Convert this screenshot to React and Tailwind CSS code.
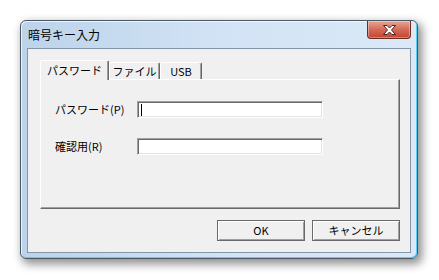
function CloseButton() {
  return (
    <div className="w-[44px] h-[18px] rounded-b-[4px] border border-t-0 border-[#6b2a22] bg-gradient-to-b from-[#e6a595] via-[#d46b58] to-[#c4432f] shadow-[inset_0_0_0_1px_rgba(255,255,255,0.35)] flex items-center justify-center">
      <svg width="13" height="10" viewBox="0 0 13 10">
        <polygon
          points="0.5,0.5 4,0.5 6.5,3 9,0.5 12.5,0.5 8.5,5 12.5,9.5 9,9.5 6.5,7 4,9.5 0.5,9.5 4.5,5"
          fill="#ffffff"
          stroke="#4a2420"
          strokeWidth="1"
          strokeLinejoin="round"
        />
      </svg>
    </div>
  );
}

function Tab({ label, active, width }) {
  if (active) {
    return (
      <div
        className={`${width} relative z-10 h-[20px] -mb-px bg-[#f0f0f0] border-l border-t border-white border-r border-r-[#696969] rounded-t-[2px] shadow-[inset_-1px_0_0_#a0a0a0] flex items-center pl-[6px] text-[11px] leading-none`}
      >
        {label}
      </div>
    );
  }
  return (
    <div
      className={`${width} h-[17px] bg-[#f0f0f0] border-l border-t border-white border-r border-r-[#696969] rounded-t-[2px] shadow-[inset_-1px_0_0_#a0a0a0] flex items-center justify-center text-[11px] leading-none`}
    >
      {label}
    </div>
  );
}

function Field({ label, caret }) {
  return (
    <div className="flex items-center">
      <div className="w-[82px] text-[11px] leading-none">{label}</div>
      <div className="w-[186px] h-[17px] bg-white border border-t-[#a0a0a0] border-l-[#a0a0a0] border-b-white border-r-white shadow-[inset_1px_1px_0_#696969,inset_-1px_-1px_0_#e3e3e3] flex items-center pl-[3px]">
        {caret && <div className="w-[1px] h-[12px] bg-black" />}
      </div>
    </div>
  );
}

function Button({ children }) {
  return (
    <div className="w-[88px] h-[21px] border border-[#696969] bg-[#f0f0f0] shadow-[inset_1px_1px_0_#ffffff,inset_-1px_-1px_0_#a0a0a0] flex items-center justify-center text-[11px] leading-none">
      {children}
    </div>
  );
}

export default function App() {
  return (
    <div className="min-h-screen bg-white pt-[20px] pl-[20px] font-['Noto_Sans_CJK_JP','Noto_Sans',sans-serif] text-black">
      <div className="w-[398px] h-[239px] rounded-[6px] border border-[#4a5866] bg-gradient-to-r from-[#bcd3ea] via-[#d2e3f5] to-[#dbe9f7] shadow-[inset_-1px_-1px_0_#5ccff5,inset_1px_1px_0_rgba(255,255,255,0.7),3px_4px_10px_1px_rgba(0,0,0,0.45)] flex flex-col px-[6px] pb-[5px]">
        <div className="h-[27px] flex items-start">
          <div className="flex-1 h-full flex items-center pl-[1px] text-[12px] leading-none">暗号キー入力</div>
          <CloseButton />
        </div>
        <div className="flex-1 border border-[#8496a8] bg-[#f0f0f0] flex flex-col pt-[11px] pl-[12px]">
          <div className="flex items-end">
            <Tab label="パスワード" active width="w-[69px]" />
            <Tab label="ファイル" width="w-[51px]" />
            <Tab label="USB" width="w-[42px]" />
          </div>
          <div className="w-[360px] h-[130px] border-l border-t border-white border-r border-b border-r-[#696969] border-b-[#696969] shadow-[inset_-1px_-1px_0_#a0a0a0] flex flex-col gap-[20px] pt-[21px] pl-[14px]">
            <Field label="パスワード(P)" caret />
            <Field label="確認用(R)" />
          </div>
          <div className="w-[360px] mt-[11px] flex justify-end gap-[7px]">
            <Button>OK</Button>
            <Button>キャンセル</Button>
          </div>
        </div>
      </div>
    </div>
  );
}
